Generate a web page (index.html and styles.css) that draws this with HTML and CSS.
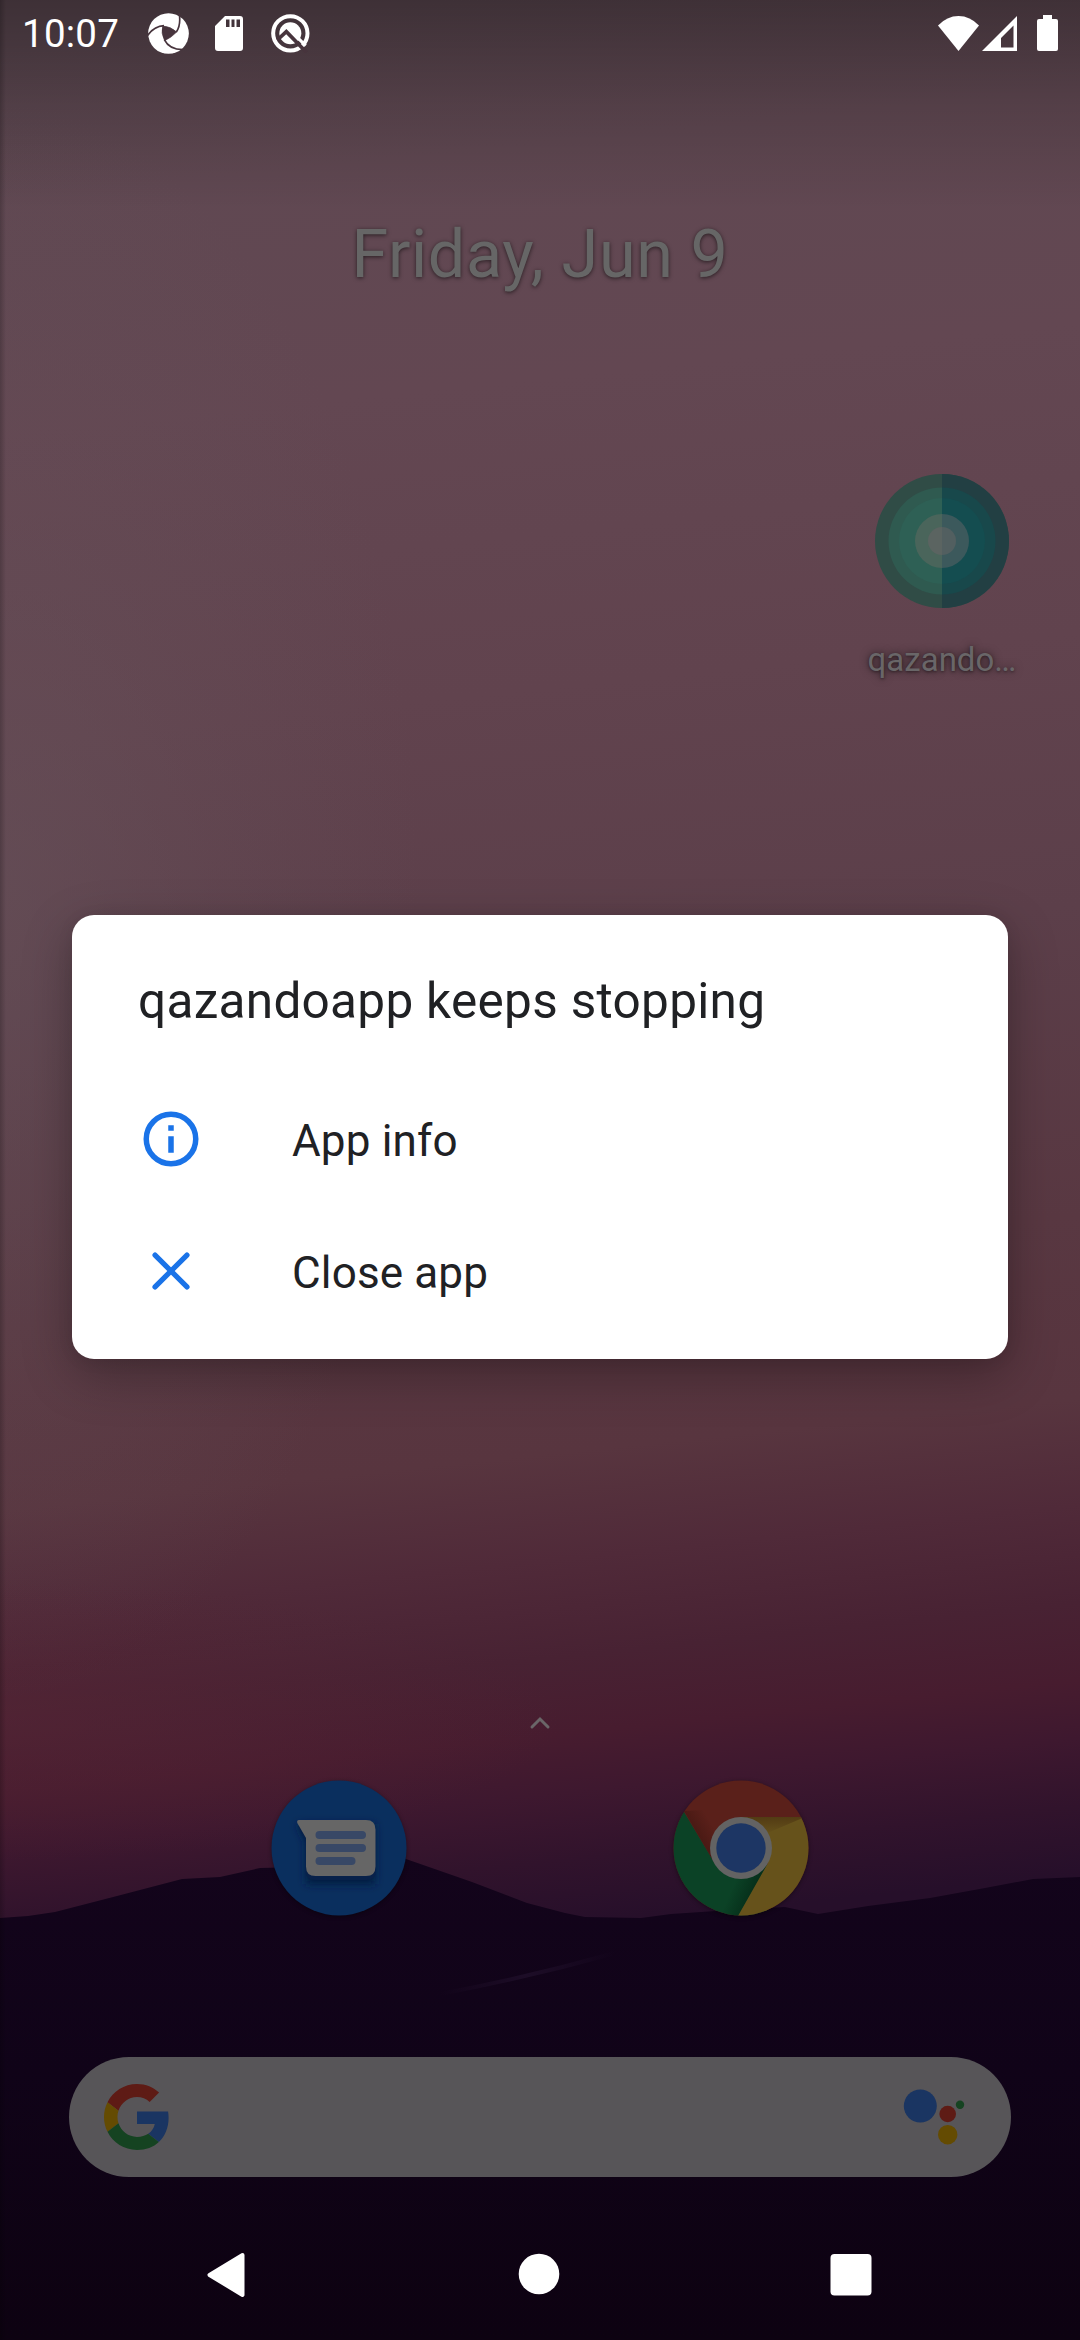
FILE: index.html
```html
<!DOCTYPE html>
<html lang="en">
<head>
<meta charset="utf-8">
<title>Home screen</title>
<link rel="stylesheet" href="styles.css">
</head>
<body>
<div class="phone">
  <svg class="wallpaper" viewBox="0 0 1080 2340" preserveAspectRatio="none" aria-hidden="true">
    <defs>
      <linearGradient id="sky" gradientUnits="userSpaceOnUse" x1="440" y1="0" x2="640" y2="1920">
        <stop offset="0" stop-color="#5b4750"/>
        <stop offset=".08" stop-color="#604852"/>
        <stop offset=".2" stop-color="#634752"/>
        <stop offset=".36" stop-color="#61434e"/>
        <stop offset=".5" stop-color="#5c3f4a"/>
        <stop offset=".66" stop-color="#593842"/>
        <stop offset=".755" stop-color="#58353f"/>
        <stop offset=".81" stop-color="#502a39"/>
        <stop offset=".86" stop-color="#482233"/>
        <stop offset=".9" stop-color="#471c2f"/>
        <stop offset=".93" stop-color="#3e182f"/>
        <stop offset=".965" stop-color="#31132c"/>
        <stop offset="1" stop-color="#260f2a"/>
      </linearGradient>
      <radialGradient id="haze" gradientUnits="userSpaceOnUse" cx="0" cy="0" r="1" gradientTransform="translate(0 900) scale(420 800)">
        <stop offset="0" stop-color="#66525a" stop-opacity=".6"/>
        <stop offset=".5" stop-color="#66525a" stop-opacity=".25"/>
        <stop offset="1" stop-color="#66525a" stop-opacity="0"/>
      </radialGradient>
      <radialGradient id="glow" gradientUnits="userSpaceOnUse" cx="0" cy="0" r="1" gradientTransform="translate(0 1720) scale(560 140)">
        <stop offset="0" stop-color="#562434" stop-opacity=".55"/>
        <stop offset="1" stop-color="#562434" stop-opacity="0"/>
      </radialGradient>
      <linearGradient id="ground" x1="0" y1="0" x2="0" y2="1">
        <stop offset="0" stop-color="#13041b"/>
        <stop offset=".45" stop-color="#100318"/>
        <stop offset="1" stop-color="#0d0211"/>
      </linearGradient>
      <linearGradient id="topshade" x1="0" y1="0" x2="0" y2="1">
        <stop offset="0" stop-color="#000" stop-opacity=".32"/>
        <stop offset=".5" stop-color="#000" stop-opacity=".13"/>
        <stop offset="1" stop-color="#000" stop-opacity="0"/>
      </linearGradient>
      <linearGradient id="edge" x1="0" y1="0" x2="1" y2="0">
        <stop offset="0" stop-color="#000" stop-opacity=".2"/>
        <stop offset="1" stop-color="#000" stop-opacity="0"/>
      </linearGradient>
      <linearGradient id="trail" x1="0" y1="0" x2="1" y2="0">
        <stop offset="0" stop-color="#1d0d27" stop-opacity="0"/>
        <stop offset=".5" stop-color="#1d0d27"/>
        <stop offset="1" stop-color="#1d0d27" stop-opacity="0"/>
      </linearGradient>
    </defs>
    <rect width="1080" height="2340" fill="url(#sky)"/>
    <rect width="500" height="1900" fill="url(#haze)"/>
    <rect y="1560" width="600" height="320" fill="url(#glow)"/>
    <path fill="url(#ground)" d="M0 1918 L28 1916 L55 1912 L117 1896 L182 1879 L220 1877 L260 1868 L300 1867 L360 1852 L406 1859 L472 1882 L527 1903 L565 1913 L585 1917 L641 1918 L671 1914 L716 1911 L785 1907 L818 1914 L868 1906 L930 1898 L985 1888 L1033 1879 L1080 1877 V2340 H0Z"/>
    <path d="M440 1994 Q530 1977 615 1953" fill="none" stroke="url(#trail)" stroke-width="4"/>
    <rect width="1080" height="210" fill="url(#topshade)"/>
    <rect width="6" height="2340" fill="url(#edge)"/>
  </svg>

  <header class="status">
    <span class="clock">10:07</span>
    <svg class="s-aperture" width="41" height="41" viewBox="24 24 123 123">
      <circle cx="85.500" cy="85.500" r="61" fill="#fff"/>
      <g fill="none" stroke="#47343d" stroke-width="5">
        <path fill="#47343d" d="M68 63 Q92 64 110 81 Q95 97 74 107 Q62 84 68 63Z" stroke-width="2"/>
        <path d="M109 81 Q124 60 117 22"/>
        <path d="M72 62 Q42 64 22 92"/>
        <path d="M73 104 Q88 134 128 134"/>
      </g>
    </svg>
    <svg class="s-sd" width="28" height="35" viewBox="0 0 28 35">
      <path fill="#fff" fill-rule="evenodd" d="M10 0H25Q28 0 28 3V32Q28 35 25 35H3Q0 35 0 32V10ZM11 3.500V11H14.500V3.500ZM16.500 3.500V11H19.500V3.500ZM21.500 3.500V11H25V3.500Z"/>
    </svg>
    <svg class="s-q" width="39" height="39" viewBox="393 26 117 117">
      <circle cx="451" cy="84" r="51.500" fill="none" stroke="#fff" stroke-width="12"/>
      <circle cx="451" cy="84" r="33" fill="#fff"/>
      <path d="M412 104 L439 79 L486 127 L500 141" fill="none" stroke="#47343d" stroke-width="11"/>
      <path d="M460 84 L497 121" fill="none" stroke="#fff" stroke-width="9"/>
    </svg>
    <span class="spacer"></span>
    <svg class="s-wifi" width="41" height="35" viewBox="0 0 41 35"><path fill="#fff" d="M20.500 35 L0 9.500 Q9 0 20.500 0 T41 9.500Z"/></svg>
    <svg class="s-cell" width="35" height="35" viewBox="0 0 35 35"><path fill="#fff" fill-rule="evenodd" d="M35 0V35H0ZM31.500 9.500L19 22V31.500H31.500Z"/></svg>
    <svg class="s-batt" width="21" height="36" viewBox="0 0 21 36"><path fill="#fff" d="M6 0H15V4H19Q21 4 21 6V34Q21 36 19 36H2Q0 36 0 34V6Q0 4 2 4H6Z"/></svg>
  </header>

  <div class="date">Friday, Jun 9</div>

  <main class="workspace">
    <div class="app">
      <svg width="134" height="134" viewBox="-67 -67 134 134">
        <g>
          <circle r="67" fill="#304c46"/><circle r="53.500" fill="#2f5a50"/><circle r="43" fill="#2e6055"/><circle r="27" fill="#4a655b"/><circle r="14" fill="#5b6461"/>
        </g>
        <path fill="#223f43" d="M0-67A67 67 0 0 1 0 67Z"/>
        <path fill="#18484b" d="M0-53.500A53.500 53.500 0 0 1 0 53.500Z"/>
        <path fill="#144d50" d="M0-43A43 43 0 0 1 0 43Z"/>
        <path fill="#3c595c" d="M0-27A27 27 0 0 1 0 27Z"/>
        <path fill="#525f60" d="M0-14A14 14 0 0 1 0 14Z"/>
      </svg>
      <span class="app-label">qazando…</span>
    </div>
  </main>

  <div class="handle">
    <svg width="24" height="16" viewBox="0 0 24 16"><path d="M4 13L12 5L20 13" fill="none" stroke="#6a6668" stroke-width="3" stroke-linecap="round"/></svg>
  </div>

  <div class="dock">
    <svg class="dock-icon" width="136" height="136" viewBox="272 1780 136 136">
      <defs><filter id="soft" x="-30%" y="-30%" width="160%" height="170%"><feGaussianBlur stdDeviation="4"/></filter></defs>
      <circle cx="340" cy="1848" r="67.500" fill="#0a2f5e"/>
      <path fill="#061c40" filter="url(#soft)" d="M298 1824H376V1884H307V1842Z"/>
      <path fill="#08214a" d="M299 1826H368Q376.500 1826 376.500 1834V1872Q376.500 1880 368 1880H316Q307 1880 307 1872V1841Z"/>
      <path fill="#666" d="M300 1820H367Q376.500 1820 376.500 1829.500V1866.500Q376.500 1876 367 1876H316.500Q307 1876 307 1866.500V1838L298.300 1823Q297.500 1820 300 1820Z"/>
      <g stroke="#384866" stroke-width="8" stroke-linecap="round"><path d="M320.500 1835H363M320.500 1848H363M320.500 1861H352.500"/></g>
    </svg>
    <svg class="dock-icon" width="136" height="136" viewBox="-68 -68 136 136">
      <defs>
        <clipPath id="disc"><circle r="67.500"/></clipPath>
        <linearGradient id="redshade" gradientUnits="userSpaceOnUse" x1="-42" y1="0" x2="-22" y2="-12"><stop offset="0" stop-color="#3c140f" stop-opacity=".7"/><stop offset="1" stop-color="#3c140f" stop-opacity="0"/></linearGradient>
        <linearGradient id="yellowshade" gradientUnits="userSpaceOnUse" x1="0" y1="-31" x2="0" y2="-14"><stop offset="0" stop-color="#4d3512" stop-opacity=".8"/><stop offset="1" stop-color="#4d3512" stop-opacity="0"/></linearGradient>
        <linearGradient id="greenshade" gradientUnits="userSpaceOnUse" x1="12" y1="42" x2="-6" y2="34"><stop offset="0" stop-color="#052c18" stop-opacity=".8"/><stop offset="1" stop-color="#052c18" stop-opacity="0"/></linearGradient>
      </defs>
      <g clip-path="url(#disc)">
        <rect x="-68" y="-68" width="136" height="136" fill="#5a201a"/>
        <path fill="url(#redshade)" d="M-57-37L-26 16L0-10V-40Z"/>
        <path fill="#0b4226" d="M-57-36L-26 16L0 31L26 16V68H-68V-50Z"/>
        <path fill="url(#greenshade)" d="M-20 24L27 16L-3 68H-20Z"/>
        <path fill="#66521b" d="M0-31H68V68H-3L27 15L20-10Z"/>
        <path fill="url(#yellowshade)" d="M0-31H64L24-14Z"/>
      </g>
      <circle r="31" fill="#636363"/>
      <circle r="24.700" fill="#1d3664"/>
    </svg>
  </div>

  <div class="search">
    <svg width="66" height="66" viewBox="0 0 48 48">
      <path fill="#5e1b15" d="M24 9.500c3.540 0 6.710 1.220 9.210 3.600l6.850-6.850C35.900 2.380 30.470 0 24 0 14.620 0 6.510 5.380 2.560 13.220l7.980 6.190C12.430 13.720 17.740 9.500 24 9.500z"/>
      <path fill="#1a3562" d="M46.980 24.550c0-1.570-.15-3.090-.38-4.550H24v9.020h12.940c-.58 2.960-2.260 5.480-4.780 7.180l7.730 6c4.510-4.180 7.090-10.360 7.090-17.650z"/>
      <path fill="#644b02" d="M10.530 28.590c-.48-1.450-.76-2.990-.76-4.590s.27-3.140.76-4.590l-7.980-6.190C.92 16.460 0 20.120 0 24c0 3.880.92 7.540 2.560 10.780l7.970-6.190z"/>
      <path fill="#154321" d="M24 48c6.480 0 11.930-2.130 15.890-5.810l-7.730-6c-2.150 1.450-4.920 2.300-8.160 2.300-6.260 0-11.570-4.220-13.470-9.910l-7.980 6.190C6.510 42.620 14.620 48 24 48z"/>
    </svg>
    <svg width="66" height="66" viewBox="901 2084 66 66">
      <circle cx="920.300" cy="2106" r="16.500" fill="#1a3562"/>
      <circle cx="947.700" cy="2114" r="8.300" fill="#5e1b15"/>
      <circle cx="960" cy="2104.700" r="4.200" fill="#154321"/>
      <circle cx="947.700" cy="2134.700" r="9.700" fill="#644b02"/>
    </svg>
  </div>

  <nav class="nav">
    <svg width="42" height="46" viewBox="0 0 42 46"><path d="M37.500 3L4.500 23L37.500 43Z" fill="#fff" stroke="#fff" stroke-width="4" stroke-linejoin="round"/></svg>
    <svg width="42" height="46" viewBox="0 0 42 46"><circle cx="21" cy="22" r="20.300" fill="#fff"/></svg>
    <svg width="42" height="46" viewBox="0 0 42 46"><rect x=".5" y="2" width="41" height="41.500" rx="4" fill="#fff"/></svg>
  </nav>

  <section class="dialog" role="dialog">
    <h1 class="dialog-title">qazandoapp keeps stopping</h1>
    <div class="option">
      <svg width="66" height="66" viewBox="0 0 24 24"><circle cx="12" cy="12" r="9" fill="none" stroke="#1a73e8" stroke-width="2"/><path fill="#1a73e8" d="M11 7h2v2h-2zM11 11h2v6h-2z"/></svg>
      <span>App info</span>
    </div>
    <div class="option">
      <svg width="66" height="66" viewBox="0 0 24 24"><path d="M6.200 6.200L17.800 17.800M17.800 6.200L6.200 17.800" fill="none" stroke="#1a73e8" stroke-width="1.900" stroke-linecap="round"/></svg>
      <span>Close app</span>
    </div>
  </section>
</div>
</body>
</html>
```

FILE: styles.css
```css
* { box-sizing: border-box; }
body { margin: 0; font-family: Roboto, "Noto Sans", sans-serif; }
svg { display: block; flex: none; }

.phone {
  position: relative;
  isolation: isolate;
  width: 1080px;
  height: 2340px;
  overflow: hidden;
  display: flex;
  flex-direction: column;
}
.wallpaper {
  position: absolute;
  inset: 0;
  width: 100%;
  height: 100%;
  z-index: -1;
}

.status {
  height: 66px;
  display: flex;
  align-items: center;
  padding: 0 22px;
  color: #fff;
}
.clock {
  width: 126px;
  font-size: 38.500px;
  letter-spacing: .25px;
  line-height: 66px;
  padding-top: 2px;
}
.s-sd { margin-left: 26px; }
.s-q { margin-left: 28px; }
.spacer { flex: 1; }
.s-cell { margin-left: 3px; }
.s-batt { margin-left: 20px; }

.date {
  height: 253px;
  padding-top: 149px;
  text-align: center;
  font-size: 66.500px;
  letter-spacing: .6px;
  line-height: 78px;
  color: #666;
  text-shadow: 0 1px 4px rgba(0, 0, 0, .6);
}

.workspace {
  height: 1395px;
  padding: 155px 37px 0 0;
  display: flex;
  justify-content: flex-end;
  align-items: flex-start;
}
.app {
  width: 202px;
  display: flex;
  flex-direction: column;
  align-items: center;
  gap: 32px;
}
.app-label {
  font-size: 33px;
  line-height: 40px;
  color: #696668;
  text-shadow: 0 0 8px rgba(0, 0, 0, .6), 0 1px 3px rgba(0, 0, 0, .4);
}

.handle {
  height: 66px;
  display: flex;
  justify-content: center;
}
.dock {
  height: 277px;
  padding: 0 271px;
  display: flex;
  justify-content: space-between;
}
.dock-icon { filter: drop-shadow(0 1px 2px rgba(0, 0, 0, .4)); }

.search {
  width: 942px;
  height: 120px;
  margin: 0 auto;
  padding: 0 44px 0 35px;
  display: flex;
  align-items: center;
  justify-content: space-between;
  border-radius: 60px;
  background: #575558;
}

.nav {
  flex: 1;
  display: flex;
  justify-content: space-between;
  padding: 75px 208px 0 205px;
}

.dialog {
  position: absolute;
  left: 72px;
  top: 915px;
  width: 936px;
  height: 444px;
  padding: 50px 66px 0;
  border-radius: 22px;
  background: #fff;
  color: #202124;
  box-shadow: 0 16px 50px rgba(0, 0, 0, .28), 0 2px 16px rgba(0, 0, 0, .08);
}
.dialog-title {
  margin: 0 0 38px;
  font-size: 49.500px;
  font-weight: 400;
  letter-spacing: .3px;
  line-height: 72px;
}
.option {
  height: 132px;
  display: flex;
  align-items: center;
  gap: 88px;
  font-size: 44px;
  letter-spacing: .15px;
}
.option svg { margin-top: -4px; }
```
